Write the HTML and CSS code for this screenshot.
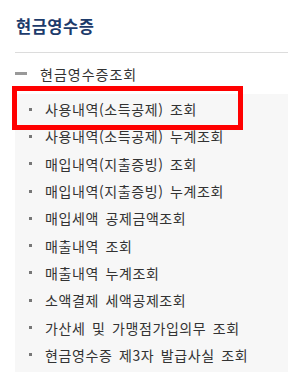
FILE: index.html
```html
<!DOCTYPE html>
<html lang="ko">
<head>
<meta charset="utf-8">
<link rel="stylesheet" href="styles.css">
</head>
<body>
<div class="panel">
  <h2 class="title">현금영수증</h2>
  <div class="section">
    <div class="section-head"><span class="dash"></span><span>현금영수증조회</span></div>
    <ul class="menu">
      <li class="item active"><span class="bullet"></span>사용내역(소득공제) 조회<span class="highlight"></span></li>
      <li class="item"><span class="bullet"></span>사용내역(소득공제) 누계조회</li>
      <li class="item"><span class="bullet"></span>매입내역(지출증빙) 조회</li>
      <li class="item"><span class="bullet"></span>매입내역(지출증빙) 누계조회</li>
      <li class="item"><span class="bullet"></span>매입세액 공제금액조회</li>
      <li class="item"><span class="bullet"></span>매출내역 조회</li>
      <li class="item"><span class="bullet"></span>매출내역 누계조회</li>
      <li class="item"><span class="bullet"></span>소액결제 세액공제조회</li>
      <li class="item"><span class="bullet"></span>가산세 및 가맹점가입의무 조회</li>
      <li class="item"><span class="bullet"></span>현금영수증 제3자 발급사실 조회</li>
    </ul>
  </div>
</div>
</body>
</html>
```
FILE: styles.css
```css
html, body {
  margin: 0;
  padding: 0;
  background: #fff;
}
body {
  font-family: "Noto Sans CJK KR", "Noto Sans", sans-serif;
  width: 288px;
  height: 378px;
  overflow: hidden;
}
.panel {
  padding-left: 15px;
}
.title {
  margin: 0;
  padding: 15px 0 0 1px;
  height: 53px;
  box-sizing: border-box;
  font-size: 16.5px;
  font-weight: bold;
  color: #1d3b6b;
  line-height: 22px;
  letter-spacing: 0.5px;
  border-bottom: 1px solid #dcdcdc;
}
.section-head {
  display: flex;
  align-items: center;
  height: 41px;
  font-size: 14px;
  color: #333;
  letter-spacing: 1px;
}
.dash {
  width: 12px;
  height: 3px;
  background: #999;
  margin-right: 13px;
}
.menu {
  list-style: none;
  margin: 0;
  padding: 1.5px 0 4px 0;
  background: #f7f7f7;
}
.item {
  position: relative;
  display: flex;
  align-items: center;
  height: 27.3px;
  font-size: 14px;
  color: #333;
  padding-left: 14px;
  letter-spacing: 0.6px;
  word-spacing: 2px;
  white-space: pre;
}
.bullet {
  width: 3px;
  height: 3px;
  background: #777;
  margin-right: 13px;
}
.highlight {
  position: absolute;
  left: -3px;
  top: -10px;
  width: 221px;
  height: 34px;
  border: 5px solid #f00;
}
```
